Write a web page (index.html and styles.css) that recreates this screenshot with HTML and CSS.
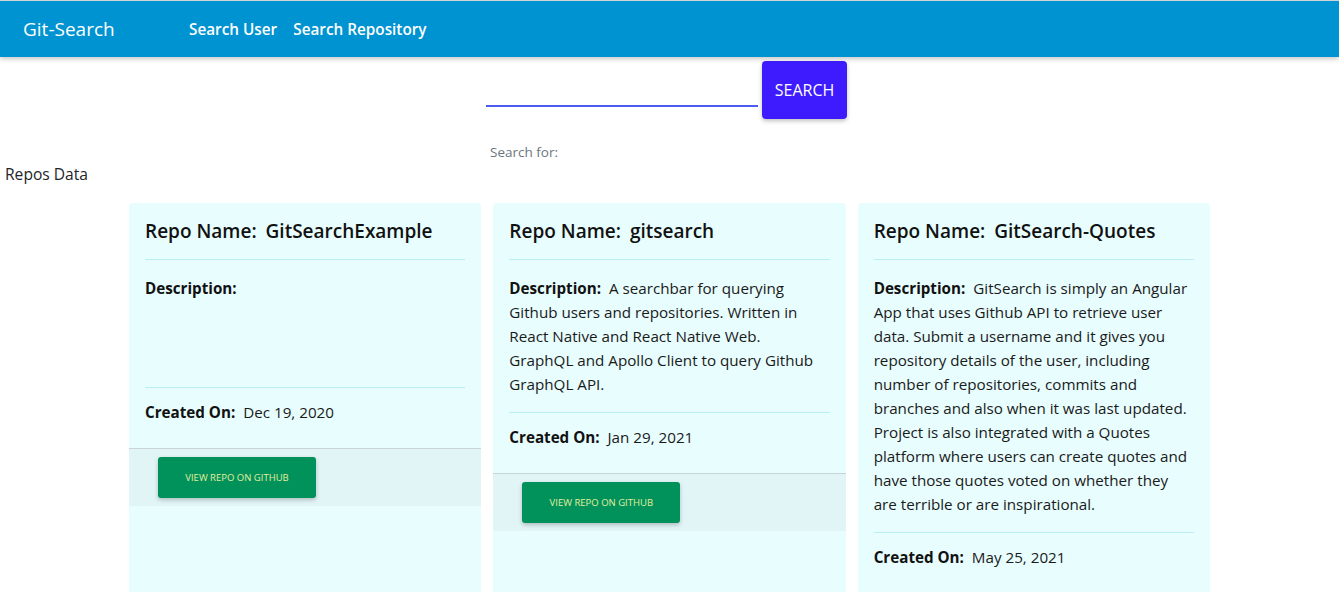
FILE: index.html
```html
<!DOCTYPE html>
<html lang="en">
<head>
<meta charset="utf-8">
<title>Git-Search</title>
<link rel="stylesheet" href="styles.css">
</head>
<body>
<nav class="navbar">
  <a class="brand" href="#">Git-Search</a>
  <div class="nav-links">
    <a class="nav-link" href="#">Search User</a>
    <a class="nav-link" href="#">Search Repository</a>
  </div>
</nav>

<section class="search">
  <div class="search-row">
    <div class="field"><input class="field-input" type="text" aria-label="Search"></div>
    <button class="search-btn" type="button">SEARCH</button>
  </div>
  <p class="search-for">Search for:</p>
</section>

<p class="repos-title">Repos Data</p>

<main class="cards">
  <article class="card">
    <div class="card-body">
      <h5 class="card-title"><span class="label">Repo Name:</span> GitSearchExample</h5>
      <hr class="rule rule-top">
      <p class="desc desc-empty"><span class="label">Description:</span></p>
      <hr class="rule">
      <p class="created"><span class="label">Created On:</span> Dec 19, 2020</p>
    </div>
    <div class="card-footer"><a class="gh-btn" href="#">VIEW REPO ON GITHUB</a></div>
  </article>

  <article class="card">
    <div class="card-body">
      <h5 class="card-title"><span class="label">Repo Name:</span> gitsearch</h5>
      <hr class="rule rule-top">
      <p class="desc"><span class="label">Description:</span> A searchbar for querying Github users and repositories. Written in React Native and React Native Web. GraphQL and Apollo Client to query Github GraphQL API.</p>
      <hr class="rule">
      <p class="created"><span class="label">Created On:</span> Jan 29, 2021</p>
    </div>
    <div class="card-footer"><a class="gh-btn" href="#">VIEW REPO ON GITHUB</a></div>
  </article>

  <article class="card">
    <div class="card-body">
      <h5 class="card-title"><span class="label">Repo Name:</span> GitSearch-Quotes</h5>
      <hr class="rule rule-top">
      <p class="desc"><span class="label">Description:</span> GitSearch is simply an Angular App that uses Github API to retrieve user data. Submit a username and it gives you repository details of the user, including number of repositories, commits and branches and also when it was last updated. Project is also integrated with a Quotes platform where users can create quotes and have those quotes voted on whether they are terrible or are inspirational.</p>
      <hr class="rule">
      <p class="created"><span class="label">Created On:</span> May 25, 2021</p>
    </div>
    <div class="card-footer"><a class="gh-btn" href="#">VIEW REPO ON GITHUB</a></div>
  </article>
</main>
</body>
</html>
```

FILE: styles.css
```css
* { box-sizing: border-box; }

html, body {
  margin: 0;
  padding: 0;
  background: #ffffff;
  font-family: "Open Sans", "Noto Sans", "Liberation Sans", sans-serif;
  color: #212529;
  overflow: hidden;
}

.navbar {
  display: flex;
  align-items: center;
  height: 57px;
  border-top: 1px solid #cfd3d6;
  background: #0093d1;
  box-shadow: 0 2px 5px rgba(0, 0, 0, 0.22);
  padding: 0 0 1px 23px;
  position: relative;
  z-index: 1;
}

.brand {
  color: #ffffff;
  text-decoration: none;
  font-size: 19px;
  width: 166px;
}

.nav-links {
  display: flex;
  gap: 16px;
}

.nav-link {
  color: #ffffff;
  text-decoration: none;
  font-size: 15.3px;
  font-weight: 600;
}

.search {
  width: 367px;
  margin: 0 auto;
}

.search-row {
  display: flex;
  align-items: flex-start;
  gap: 4px;
}

.field {
  width: 272px;
  margin-top: 3px;
}

.field-input {
  display: block;
  width: 100%;
  height: 47px;
  border: none;
  border-bottom: 2px solid #4e5cf2;
  background: #ffffff;
  outline: none;
  font: inherit;
}

.search-btn {
  margin-top: 4px;
  width: 85px;
  height: 58px;
  border: none;
  border-radius: 4px;
  background: #3e1bff;
  color: #ffffff;
  font-family: inherit;
  font-size: 16px;
  box-shadow: 0 2px 4px rgba(0, 0, 0, 0.25);
  padding: 0;
}

.search-for {
  margin: 23px 0 0 4px;
  font-size: 13.5px;
  line-height: 20px;
  color: #6c757d;
}

.repos-title {
  margin: 0 0 17px;
  padding-left: 5px;
  font-size: 15.6px;
  line-height: 24px;
  color: #212529;
}

.cards {
  width: 1081px;
  margin: 0 auto;
  display: grid;
  grid-template-columns: repeat(3, 1fr);
  gap: 12px;
  align-items: start;
}

.card {
  background: #e8fdfe;
  border-radius: 4px;
  min-height: 420px;
  overflow: hidden;
}

.card-body {
  padding: 16px 16px 24px;
}

.card-title {
  margin: 0;
  font-size: 19px;
  line-height: 24px;
  font-weight: 600;
  color: #111111;
}

.label {
  font-weight: 700;
  margin-right: 4px;
  color: #111111;
}

.card-title .label { font-weight: 600; }

.rule {
  margin: 16px 0 15px;
  border: none;
  border-top: 1px solid #b8eef0;
  height: 0;
}

.rule-top { margin-bottom: 16px; }

.desc {
  margin: 0;
  padding-right: 2px;
  font-size: 15.2px;
  line-height: 24px;
  color: #1a1a1a;
}

.desc-empty { min-height: 95px; }

.created {
  margin: -3px 0 0;
  font-size: 15.2px;
  line-height: 24px;
  color: #1a1a1a;
}

.card-footer {
  background: #e1f4f6;
  border-top: 1px solid #c9d4d7;
  padding: 8px 29px;
}

.gh-btn {
  display: flex;
  align-items: center;
  justify-content: center;
  width: 158px;
  height: 41px;
  border-radius: 3px;
  background: #00925a;
  color: #e4ee9f;
  font-size: 9.5px;
  text-decoration: none;
  box-shadow: 0 2px 4px rgba(0, 0, 0, 0.22);
}
```
